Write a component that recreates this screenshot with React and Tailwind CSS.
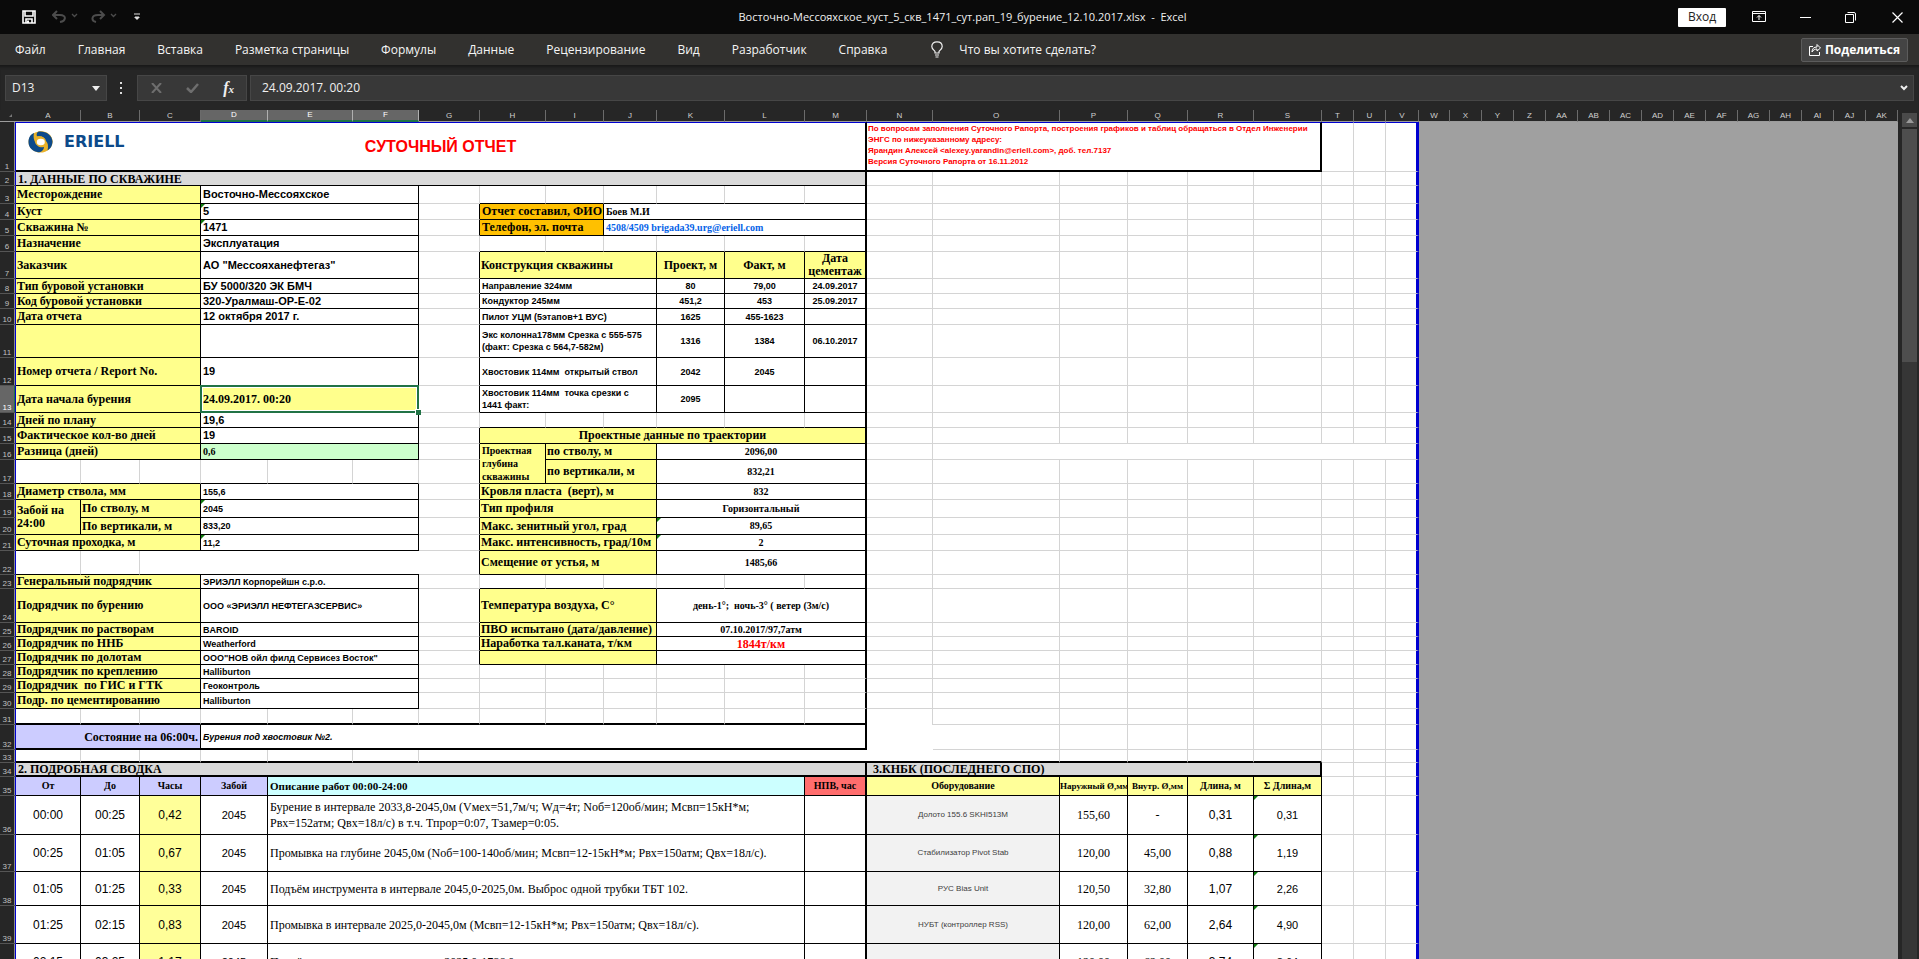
import React, { useState } from 'react';

const COLUMNS = [
    ['A', 'w-[65px]'], ['B', 'w-[59px]'], ['C', 'w-[61px]'], ['D', 'w-[67px]'], ['E', 'w-[85px]'],
    ['F', 'w-[66px]'], ['G', 'w-[61px]'], ['H', 'w-[66px]'], ['I', 'w-[58px]'], ['J', 'w-[53px]'],
    ['K', 'w-[68px]'], ['L', 'w-[80px]'], ['M', 'w-[62px]'], ['N', 'w-[66px]'], ['O', 'w-[127px]'],
    ['P', 'w-[68px]'], ['Q', 'w-[60px]'], ['R', 'w-[66px]'], ['S', 'w-[68px]'], ['T', 'w-[32px]'],
    ['U', 'w-[32px]'], ['V', 'w-[33px]'], ['W', 'w-[31px]'], ['X', 'w-[32px]'], ['Y', 'w-[32px]'],
    ['Z', 'w-[32px]'], ['AA', 'w-[32px]'], ['AB', 'w-[32px]'], ['AC', 'w-[32px]'], ['AD', 'w-[32px]'],
    ['AE', 'w-[32px]'], ['AF', 'w-[32px]'], ['AG', 'w-[32px]'], ['AH', 'w-[32px]'], ['AI', 'w-[32px]'],
    ['AJ', 'w-[32px]'], ['AK', 'w-[32px]'],
];

const ROW_HEIGHTS = [
    'h-[50px]', 'h-[14px]', 'h-[18px]', 'h-[16px]', 'h-[16px]', 'h-[16px]', 'h-[27px]', 'h-[15px]',
    'h-[15px]', 'h-[16px]', 'h-[33px]', 'h-[28px]', 'h-[27px]', 'h-[15px]', 'h-[16px]', 'h-[16px]',
    'h-[24px]', 'h-[16px]', 'h-[18px]', 'h-[17px]', 'h-[16px]', 'h-[24px]', 'h-[14px]', 'h-[34px]',
    'h-[14px]', 'h-[14px]', 'h-[14px]', 'h-[14px]', 'h-[14px]', 'h-[16px]', 'h-[16px]', 'h-[25px]',
    'h-[13px]', 'h-[14px]', 'h-[19px]', 'h-[39px]', 'h-[37px]', 'h-[34px]', 'h-[38px]', 'h-[36px]',
];

const SHEET_COLS = 22; // A..V are inside the print area, the rest is grey
const SERIF = "font-['Liberation_Serif',serif]";
const SANS = "font-['Liberation_Sans',sans-serif]";

const STYLES = {
    section: `bg-[#d9d9d9] ${SERIF} text-[12px] leading-[12px] font-bold align-bottom pl-[2px]`,
    sectionIn: `bg-[#d9d9d9] ${SERIF} text-[12px] leading-[12px] font-bold align-bottom pl-[6px]`,
    label: `bg-[#ffff8c] ${SERIF} text-[12px] leading-[13px] font-bold pl-[1px]`,
    labelC: `bg-[#ffff8c] ${SERIF} text-[12px] leading-[13px] font-bold text-center`,
    labelSm: `bg-[#ffff8c] ${SERIF} text-[10px] leading-[13px] font-bold pl-[2px]`,
    orange: `bg-[#ffc000] ${SERIF} text-[12px] leading-[13px] font-bold pl-[2px] whitespace-nowrap`,
    value: `bg-white ${SANS} text-[11px] leading-[13px] font-bold pl-[2px]`,
    valueSm: `bg-white ${SANS} text-[9px] leading-[12px] font-bold pl-[2px]`,
    valueSmC: `bg-white ${SANS} text-[9px] leading-[12px] font-bold text-center`,
    diff: `bg-[#ccffcc] ${SERIF} text-[10px] leading-[12px] font-bold pl-[2px]`,
    serifSm: `bg-white ${SERIF} text-[10px] leading-[12px] font-bold pl-[2px]`,
    serifSmC: `bg-white ${SERIF} text-[10px] leading-[12px] font-bold text-center`,
    red: `bg-white ${SERIF} text-[12px] leading-[12px] font-bold text-center text-[#ff0000]`,
    active: `bg-[#ffff8c] ${SERIF} text-[12px] leading-[13px] font-bold pl-[2px]`,
    status: `bg-[#ccccff] ${SERIF} text-[12px] leading-[14px] font-bold text-right pr-[2px]`,
    statusText: `bg-white ${SANS} text-[9px] leading-[12px] font-bold italic pl-[2px]`,
    head: `bg-[#ccccff] ${SERIF} text-[10px] leading-[12px] font-bold text-center`,
    headDesc: `bg-[#ccffff] ${SERIF} text-[11px] leading-[14px] font-bold pl-[2px]`,
    headNpv: `bg-[#ff6d6d] ${SERIF} text-[10px] leading-[12px] font-bold text-center`,
    headY: `bg-[#ffff99] ${SERIF} text-[10px] leading-[12px] font-bold text-center`,
    headYSm: `bg-[#ffff99] ${SERIF} text-[9px] leading-[12px] font-bold text-center whitespace-nowrap`,
    time: `bg-white ${SANS} text-[12px] leading-[14px] text-center`,
    hours: `bg-[#ffff99] ${SANS} text-[12px] leading-[14px] text-center`,
    depth: `bg-white ${SANS} text-[11px] leading-[14px] text-center`,
    desc: `bg-white ${SERIF} text-[12px] leading-[16px] pl-[2px]`,
    equip: `bg-[#f2f2f2] ${SANS} text-[8px] leading-[12px] text-center text-[#404040]`,
    dia: `bg-white ${SERIF} text-[12px] leading-[14px] text-center`,
};

const BLACK = 'border-r border-b border-r-black border-b-black';
const THICK_R = 'border-r-2 border-b border-r-black border-b-black';
const THICK_RB = 'border-r-2 border-b-2 border-r-black border-b-black';

// ref: [text, style, colSpan, rowSpan, border, flagged]
const CELLS = {
    A2: ['1. ДАННЫЕ ПО СКВАЖИНЕ', 'section', 13, 1, THICK_R],
    A3: ['Месторождение', 'label', 3],
    D3: ['Восточно-Мессояхское', 'value', 3],
    A4: ['Куст', 'label', 3],
    D4: ['5', 'value', 3, 1, BLACK, true],
    A5: ['Скважина №', 'label', 3],
    D5: ['1471', 'value', 3, 1, BLACK, true],
    A6: ['Назначение', 'label', 3],
    D6: ['Эксплуатация', 'value', 3],
    A7: ['Заказчик', 'label', 3],
    D7: ['АО "Мессояханефтегаз"', 'value', 3],
    A8: ['Тип буровой установки', 'label', 3],
    D8: ['БУ 5000/320 ЭК БМЧ', 'value', 3],
    A9: ['Код буровой установки', 'label', 3],
    D9: ['320-Уралмаш-ОР-Е-02', 'value', 3],
    A10: ['Дата отчета', 'label', 3],
    D10: ['12 октября 2017 г.', 'value', 3],
    A11: ['', 'label', 3],
    D11: ['', 'value', 3],
    A12: ['Номер отчета / Report No.', 'label', 3],
    D12: ['19', 'value', 3],
    A13: ['Дата начала бурения', 'label', 3],
    D13: ['24.09.2017. 00:20', 'active', 3],
    A14: ['Дней по плану', 'label', 3],
    D14: ['19,6', 'value', 3],
    A15: ['Фактическое кол-во дней', 'label', 3],
    D15: ['19', 'value', 3],
    A16: ['Разница (дней)', 'label', 3],
    D16: ['0,6', 'diff', 3],
    A18: ['Диаметр ствола, мм', 'label', 3],
    D18: ['155,6', 'valueSm', 3],
    A19: ['Забой на 24:00', 'label', 1, 2],
    B19: ['По стволу, м', 'label', 2],
    D19: ['2045', 'valueSm', 3, 1, BLACK, true],
    B20: ['По вертикали, м', 'label', 2],
    D20: ['833,20', 'valueSm', 3],
    A21: ['Суточная проходка, м', 'label', 3],
    D21: ['11,2', 'valueSm', 3, 1, BLACK, true],
    A23: ['Генеральный подрядчик', 'label', 3],
    D23: ['ЭРИЭЛЛ Корпорейшн с.р.о.', 'valueSm', 3],
    A24: ['Подрядчик по бурению', 'label', 3],
    D24: ['ООО «ЭРИЭЛЛ НЕФТЕГАЗСЕРВИС»', 'valueSm', 3],
    A25: ['Подрядчик по растворам', 'label', 3],
    D25: ['BAROID', 'valueSm', 3],
    A26: ['Подрядчик по ННБ', 'label', 3],
    D26: ['Weatherford', 'valueSm', 3],
    A27: ['Подрядчик по долотам', 'label', 3],
    D27: ['ООО"НОВ ойл филд Сервисез Восток"', 'valueSm', 3],
    A28: ['Подрядчик по креплению', 'label', 3],
    D28: ['Halliburton', 'valueSm', 3],
    A29: ['Подрядчик  по ГИС и ГТК', 'label', 3],
    D29: ['Геоконтроль', 'valueSm', 3],
    A30: ['Подр. по цементированию', 'label', 3],
    D30: ['Halliburton', 'valueSm', 3],
    A32: ['Состояние на 06:00ч.', 'status', 3, 1, 'border-r border-b-2 border-r-black border-b-black'],
    D32: ['Бурения под хвостовик №2.', 'statusText', 10, 1, THICK_RB],

    H4: ['Отчет составил, ФИО', 'orange', 2],
    J4: ['Боев М.И', 'serifSm', 4, 1, THICK_R],
    H5: ['Телефон, эл. почта', 'orange', 2],
    J5: ['4508/4509 brigada39.urg@eriell.com', 'serifSm', 4, 1, THICK_R],
    H7: ['Конструкция скважины', 'label', 3],
    K7: ['Проект, м', 'labelC', 1],
    L7: ['Факт, м', 'labelC', 1],
    M7: ['Дата цементаж', 'labelC', 1, 1, THICK_R],
    H8: ['Направление 324мм', 'valueSm', 3],
    K8: ['80', 'valueSmC', 1],
    L8: ['79,00', 'valueSmC', 1],
    M8: ['24.09.2017', 'valueSmC', 1, 1, THICK_R],
    H9: ['Кондуктор 245мм', 'valueSm', 3],
    K9: ['451,2', 'valueSmC', 1],
    L9: ['453', 'valueSmC', 1],
    M9: ['25.09.2017', 'valueSmC', 1, 1, THICK_R],
    H10: ['Пилот УЦМ (5этапов+1 ВУС)', 'valueSm', 3],
    K10: ['1625', 'valueSmC', 1],
    L10: ['455-1623', 'valueSmC', 1],
    M10: ['', 'valueSmC', 1, 1, THICK_R],
    H11: ['Экс колонна178мм Срезка с 555-575\n(факт: Срезка с 564,7-582м)', 'valueSm', 3],
    K11: ['1316', 'valueSmC', 1],
    L11: ['1384', 'valueSmC', 1],
    M11: ['06.10.2017', 'valueSmC', 1, 1, THICK_R],
    H12: ['Хвостовик 114мм  открытый ствол', 'valueSm', 3],
    K12: ['2042', 'valueSmC', 1],
    L12: ['2045', 'valueSmC', 1],
    M12: ['', 'valueSmC', 1, 1, THICK_R],
    H13: ['Хвостовик 114мм  точка срезки с\n1441 факт:', 'valueSm', 3],
    K13: ['2095', 'valueSmC', 1],
    L13: ['', 'valueSmC', 1],
    M13: ['', 'valueSmC', 1, 1, THICK_R],
    H15: ['Проектные данные по траектории', 'labelC', 6, 1, THICK_R],
    H16: ['Проектная глубина скважины', 'labelSm', 1, 2],
    I16: ['по стволу, м', 'label', 2],
    K16: ['2096,00', 'serifSmC', 3, 1, THICK_R],
    I17: ['по вертикали, м', 'label', 2],
    K17: ['832,21', 'serifSmC', 3, 1, THICK_R],
    H18: ['Кровля пласта  (верт), м', 'label', 3],
    K18: ['832', 'serifSmC', 3, 1, THICK_R],
    H19: ['Тип профиля', 'label', 3],
    K19: ['Горизонтальный', 'serifSmC', 3, 1, THICK_R],
    H20: ['Макс. зенитный угол, град', 'label', 3],
    K20: ['89,65', 'serifSmC', 3, 1, THICK_R, true],
    H21: ['Макс. интенсивность, град/10м', 'label', 3],
    K21: ['2', 'serifSmC', 3, 1, THICK_R, true],
    H22: ['Смещение от устья, м', 'label', 3],
    K22: ['1485,66', 'serifSmC', 3, 1, THICK_R],
    H24: ['Температура воздуха, С°', 'label', 3],
    K24: ['день-1°;  ночь-3° ( ветер (3м/с)', 'serifSmC', 3, 1, THICK_R],
    H25: ['ПВО испытано (дата/давление)', 'label', 3],
    K25: ['07.10.2017/97,7атм', 'serifSmC', 3, 1, THICK_R],
    H26: ['Наработка тал.каната, т/км', 'label', 3],
    K26: ['1844т/км', 'red', 3, 1, THICK_R],
    H27: ['', 'label', 3],
    K27: ['', 'serifSmC', 3, 1, THICK_R],

    A34: ['2. ПОДРОБНАЯ СВОДКА', 'section', 13, 1, THICK_RB],
    N34: ['3.КНБК (ПОСЛЕДНЕГО СПО)', 'sectionIn', 6, 1, THICK_RB],
    A35: ['От', 'head', 1],
    B35: ['До', 'head', 1],
    C35: ['Часы', 'head', 1],
    D35: ['Забой', 'head', 1],
    E35: ['Описание работ 00:00-24:00', 'headDesc', 8],
    M35: ['НПВ, час', 'headNpv', 1, 1, THICK_R],
    N35: ['Оборудование', 'headY', 2],
    P35: ['Наружный Ø,мм', 'headYSm', 1],
    Q35: ['Внутр. Ø,мм', 'headYSm', 1],
    R35: ['Длина, м', 'headY', 1],
    S35: ['Σ Длина,м', 'headY', 1],
};

const OPERATIONS = [
    ['00:00', '00:25', '0,42', 'Бурение в интервале 2033,8-2045,0м (Vмех=51,7м/ч; Wд=4т; Nоб=120об/мин; Мсвп=15кН*м;\nРвх=152атм; Qвх=18л/с) в т.ч. Тпрор=0:07, Тзамер=0:05.', 'Долото 155.6 SKHI513M', '155,60', '-', '0,31', '0,31'],
    ['00:25', '01:05', '0,67', 'Промывка на глубине 2045,0м (Nоб=100-140об/мин; Мсвп=12-15кН*м; Рвх=150атм; Qвх=18л/с).', 'Стабилизатор Pivot Stab', '120,00', '45,00', '0,88', '1,19'],
    ['01:05', '01:25', '0,33', 'Подъём инструмента в интервале 2045,0-2025,0м. Выброс одной трубки ТБТ 102.', 'РУС Bias Unit', '120,50', '32,80', '1,07', '2,26'],
    ['01:25', '02:15', '0,83', 'Промывка в интервале 2025,0-2045,0м (Мсвп=12-15кН*м; Рвх=150атм; Qвх=18л/с).', 'НУБТ (контроллер RSS)', '120,00', '62,00', '2,64', '4,90'],
    ['02:15', '03:25', '1,17', 'Подъём инструмента в интервале 2025,0-1786,0м.', '', '120,00', '62,00', '3,74', '8,64'],
];

OPERATIONS.forEach(([from, to, hours, text, equip, outer, inner, len, total], i) => {
    const row = 36 + i;
    CELLS[`A${row}`] = [from, 'time', 1];
    CELLS[`B${row}`] = [to, 'time', 1];
    CELLS[`C${row}`] = [hours, 'hours', 1];
    CELLS[`D${row}`] = ['2045', 'depth', 1];
    CELLS[`E${row}`] = [text, 'desc', 8];
    CELLS[`M${row}`] = ['', 'desc', 1, 1, THICK_R];
    CELLS[`N${row}`] = [equip, 'equip', 2];
    CELLS[`P${row}`] = [outer, 'dia', 1];
    CELLS[`Q${row}`] = [inner, 'dia', 1];
    CELLS[`R${row}`] = [len, 'time', 1];
    CELLS[`S${row}`] = [total, 'depth', 1, 1, BLACK, true];
});

// Gridlines of an empty cell, including the edges it shares with the bordered blocks
function blankBorder(row, c) {
    let right = 'border-r border-r-[#d4d4d4]';
    let bottom = 'border-b border-b-[#d4d4d4]';

    if (c === 21) right = 'border-r-3 border-r-[#0000d0]';
    else if (c === 12 && row < 32) right = 'border-r-2 border-r-black';
    else if (c === 6 && ([4, 5].includes(row) || (row >= 7 && row <= 13) || (row >= 15 && row <= 22) || (row >= 24 && row <= 27))) right = 'border-r border-r-black';
    else if (row === 22 && c >= 2 && c <= 5) right = '';
    else if (row === 33 && c >= 6 && c <= 13) right = '';
    else if (row === 32 && c === 13) right = '';
    else if (row === 16 && c >= 14) right = '';

    if ([3, 6, 14, 23].includes(row) && c >= 7 && c <= 12) bottom = 'border-b border-b-black';
    else if ([17, 22].includes(row) && c <= 5) bottom = 'border-b border-b-black';
    else if (row === 31 && c <= 12) bottom = 'border-b-2 border-b-black';
    else if (row === 33 && c <= 18) bottom = 'border-b-2 border-b-black';
    else if ((row === 31 || row === 32) && c === 13) bottom = '';

    return `${right} ${bottom}`;
}

function Logo() {
    return (
        <div className="absolute left-3 top-2 flex items-center gap-[11px]">
            <svg width="25" height="22" viewBox="0 0 25 22" aria-hidden="true">
                <ellipse cx="12.500" cy="11" rx="12" ry="10.500" fill="#e9b22a" />
                <path d="M10 0.700C17 -1 24 3 24.500 10C24.500 14 22 16 19 15C20 11 18 7 13 6.500C9 6.500 8 3 10 0.700Z" fill="#e9b22a" />
                <path d="M0.500 11C0.500 6 3 3 6 2C5 6 6 9 7 11C8 15 12 17 16 16C16 19 13 21.500 10 21.300C5 20.500 .5 17 .5 11Z" fill="#0d4a8a" />
                <path d="M11 0.600C18 0 24 4 24.500 10.500C24.500 15 22 18 19.500 19.500C20.500 15 20 12 18 10C17 6 13 4.500 9 5.500C8 3 9 1 11 .6Z" fill="#0d4a8a" />
                <path d="M9 5.500C13 4.500 17 6 18 10C16.500 8 14 7 11.500 8.500C9.500 9.500 9 11 9.500 13.500C6.500 11 6.500 7.500 9 5.500Z" fill="#e9b22a" />
                <ellipse cx="12.800" cy="11" rx="4" ry="3.200" fill="#fff" />
            </svg>
            <span className="font-['DejaVu_Sans',sans-serif] text-[16px] leading-[22px] font-bold text-[#0d4a8a]">ERIELL</span>
        </div>
    );
}

function Cell({ id, cell }) {
    const [text, kind, colSpan, rowSpan = 1, border = BLACK, flagged] = cell;
    return (
        <td colSpan={colSpan} rowSpan={rowSpan} className={`relative p-0 ${border} ${STYLES[kind]}`}>
            {flagged && (
                <svg width="4" height="4" className="absolute left-0 top-0" aria-hidden="true">
                    <path d="M0 0H4L0 4Z" fill="#107c10" />
                </svg>
            )}
            {id === 'J5' ? (
                <a href="mailto:brigada39.urg@eriell.com" className="text-[#0563e8]">{text}</a>
            ) : kind === 'orange' || kind === 'headYSm' ? (
                text
            ) : (
                <span className="whitespace-pre-wrap">{text}</span>
            )}
            {id === 'D13' && (
                <div className="absolute -inset-px z-10 border-2 border-[#217346] shadow-[inset_0_0_0_1px_white]">
                    <div className="absolute -bottom-1 -right-1 size-[6px] border-l border-t border-white bg-[#217346]" />
                </div>
            )}
        </td>
    );
}

function Row({ row, covered }) {
    const cells = [];
    for (let c = 0; c < SHEET_COLS; c++) {
        if (covered.has(`${row}:${c}`)) continue;
        const id = `${COLUMNS[c][0]}${row}`;
        const cell = CELLS[id];
        if (cell) {
            cells.push(<Cell key={id} id={id} cell={cell} />);
        } else {
            cells.push(<td key={id} className={`bg-white p-0 ${blankBorder(row, c)}`} />);
        }
    }
    return <>{cells}</>;
}

// Cells hidden under a merged neighbour
function getCovered() {
    const covered = new Set();
    Object.entries(CELLS).forEach(([id, cell]) => {
        const [, letters, digits] = id.match(/([A-Z]+)(\d+)/);
        const col = COLUMNS.findIndex(([name]) => name === letters);
        const row = Number(digits);
        for (let r = 0; r < (cell[3] || 1); r++) {
            for (let c = 0; c < cell[2]; c++) {
                if (r || c) covered.add(`${row + r}:${col + c}`);
            }
        }
    });
    return covered;
}

function RowNumber({ n }) {
    return (
        <th
            scope="row"
            className={`border-b border-r border-b-[#555] border-r-[#0000d0] p-0 pr-px text-center align-bottom text-[8px] leading-[9px] font-normal ${
                n === 13 ? 'bg-[#666] text-white shadow-[inset_-1px_0_0_#217346]' : 'bg-[#262626] text-[#c0c0c0] shadow-[inset_-1px_0_0_#8a8a8a]'
            }`}
        >
            {n}
        </th>
    );
}

function Sheet() {
    const covered = getCovered();
    return (
        <table className="w-0 table-fixed border-separate border-spacing-0 text-left font-['Liberation_Sans',sans-serif] text-black">
            <colgroup>
                <col className="w-4" />
                {COLUMNS.map(([name, width]) => (
                    <col key={name} className={width} />
                ))}
            </colgroup>
            <thead>
                <tr className="h-[12px]">
                    <td className="border-b border-b-[#9c9c9c] bg-[#262626] p-0">
                        <svg width="5" height="5" className="ml-2" aria-hidden="true">
                            <path d="M4 1V4H1Z" fill="#777" />
                        </svg>
                    </td>
                    {COLUMNS.map(([name]) => (
                        <th
                            key={name}
                            scope="col"
                            className={`p-0 text-center text-[8px] leading-[10px] font-normal ${
                                ['D', 'E', 'F'].includes(name)
                                    ? 'border-b-2 border-r border-b-[#217346] border-r-[#b0b0b0] bg-[#666] text-white'
                                    : 'border-b border-r border-b-[#9c9c9c] border-r-[#6b6b6b] bg-[#262626] text-[#d0d0d0]'
                            }`}
                        >
                            {name}
                        </th>
                    ))}
                </tr>
            </thead>
            <tbody>
                <tr className="h-[50px]">
                    <RowNumber n={1} />
                    <td colSpan={13} className="relative border-b-2 border-r-2 border-t border-b-black border-r-black border-t-[#0000d0] bg-white p-0 text-center text-[16px] leading-[18px] font-bold text-[#ff0000]">
                        <Logo />
                        СУТОЧНЫЙ ОТЧЕТ
                    </td>
                    <td colSpan={6} className="border-b-2 border-r-2 border-t border-b-black border-r-black border-t-[#0000d0] bg-white p-0 pl-px align-top text-[8px] leading-[11px] font-bold text-[#ff0000]">
                        По вопросам заполнения Суточного Рапорта, построения графиков и таблиц обращаться в Отдел Инженерии<br />
                        ЭНГС по нижеуказанному адресу:<br />
                        Ярандин Алексей &lt;alexey.yarandin@eriell.com&gt;, доб. тел.7137<br />
                        Версия Суточного Рапорта от 16.11.2012
                    </td>
                    <td className="border-b border-r border-t border-b-[#d4d4d4] border-r-[#d4d4d4] border-t-[#0000d0] bg-white p-0" />
                    <td className="border-b border-r border-t border-b-[#d4d4d4] border-r-[#d4d4d4] border-t-[#0000d0] bg-white p-0" />
                    <td className="border-b border-r-3 border-t border-b-[#d4d4d4] border-r-[#0000d0] border-t-[#0000d0] bg-white p-0" />
                    <td colSpan={15} rowSpan={40} className="bg-[#a0a0a0] p-0" />
                </tr>
                {ROW_HEIGHTS.slice(1).map((height, i) => (
                    <tr key={i} className={height}>
                        <RowNumber n={i + 2} />
                        <Row row={i + 2} covered={covered} />
                    </tr>
                ))}
            </tbody>
        </table>
    );
}

function TitleBar() {
    return (
        <header className="flex h-[34px] shrink-0 items-center justify-between bg-[#0a0a0a] text-[#f0f0f0]">
            <div className="flex flex-1 items-center pl-[22px]">
                <button aria-label="Сохранить">
                    <svg width="14" height="14" viewBox="0 0 14 14">
                        <path d="M1 1H13V13H1ZM3 1V6H11V1M4 13V9H10V13" fill="none" stroke="#fff" strokeWidth="1.600" />
                        <path d="M5 10.500H7V13H5Z" fill="#fff" />
                    </svg>
                </button>
                <button aria-label="Отменить" className="ml-4">
                    <svg width="27" height="14" viewBox="0 0 27 14" fill="none" stroke="#4c4c4c">
                        <path d="M5 1L1 5L5 9M1 5H8C15 5 14 11 8 12" strokeWidth="2" />
                        <path d="M20 4L22.500 6.500L25 4" strokeWidth="1.300" />
                    </svg>
                </button>
                <button aria-label="Повторить" className="ml-3">
                    <svg width="27" height="14" viewBox="0 0 27 14" fill="none" stroke="#4c4c4c">
                        <path d="M9 1L13 5L9 9M13 5H7C0 5 0 11 5 12" strokeWidth="2" />
                        <path d="M20 4L22.500 6.500L25 4" strokeWidth="1.300" />
                    </svg>
                </button>
                <button aria-label="Настройка панели быстрого доступа" className="ml-4">
                    <svg width="6" height="8" viewBox="0 0 6 8">
                        <path d="M0 1H6M1 4H5" stroke="#ddd" />
                        <path d="M0 4H6L3 7Z" fill="#ddd" />
                    </svg>
                </button>
            </div>
            <h1 className="whitespace-pre text-[11px] leading-4">Восточно-Мессояхское_куст_5_скв_1471_сут.рап_19_бурение_12.10.2017.xlsx  -  Excel</h1>
            <div className="flex flex-1 items-center justify-end pr-4">
                <button className="h-[19px] w-12 rounded-[1px] bg-white text-[12px] leading-4 text-[#222]">Вход</button>
                <button aria-label="Параметры ленты" className="ml-[26px]">
                    <svg width="14" height="12" viewBox="0 0 14 12" fill="none" stroke="#fff">
                        <path d="M.5 .5H13.500V10.500H.5ZM.5 2.500H13.500M7 9V4.500M5 6.500L7 4.500L9 6.500" />
                    </svg>
                </button>
                <button aria-label="Свернуть" className="ml-[34px]">
                    <svg width="11" height="11" stroke="#fff">
                        <path d="M0 5.500H11" />
                    </svg>
                </button>
                <button aria-label="Свернуть в окно" className="ml-[34px]">
                    <svg width="11" height="11" viewBox="0 0 11 11" fill="none" stroke="#fff">
                        <path d="M.5 2.500H8.500V10.500H.5ZM2.500 .5H9Q10.500 .5 10.500 2V8.500" />
                    </svg>
                </button>
                <button aria-label="Закрыть" className="ml-[36px]">
                    <svg width="11" height="11" viewBox="0 0 11 11" fill="none" stroke="#fff">
                        <path d="M.5 .5L10.500 10.500M10.500 .5L.5 10.500" strokeWidth="1.200" />
                    </svg>
                </button>
            </div>
        </header>
    );
}

const MENU = ['Файл', 'Главная', 'Вставка', 'Разметка страницы', 'Формулы', 'Данные', 'Рецензирование', 'Вид', 'Разработчик', 'Справка'];

function Ribbon() {
    return (
        <nav className="flex h-[31px] shrink-0 items-center bg-[#32312f] pl-[15px] pr-[11px] text-[12px] leading-4 text-[#f5f5f5]">
            <div className="flex gap-8">
                {MENU.map((item) => (
                    <button key={item} className="whitespace-nowrap">{item}</button>
                ))}
            </div>
            <button className="ml-11 flex items-center gap-4 whitespace-nowrap">
                <svg width="12" height="17" viewBox="0 0 12 17" fill="none" stroke="#f0f0f0">
                    <path d="M4 12V10.500C3 9 .8 8 .8 5.500C.8 2.500 3 .8 6 .8S11.200 2.500 11.200 5.500C11.200 8 9 9 8 10.500V12ZM4 14H8M4.500 16H7.500" strokeWidth="1.200" />
                </svg>
                Что вы хотите сделать?
            </button>
            <button className="ml-auto flex h-6 items-center gap-1 rounded-[2px] border border-[#5c5c5c] bg-[#444] px-[7px] font-bold text-white">
                <svg width="12" height="13" viewBox="0 0 12 13" fill="none" stroke="#fff">
                    <path d="M4 3.500H.5V12.500H10.500V9M3 9C3 5.500 5 4 8 4V1.500L11.500 5L8 8V6C6 6 4 7 3 9Z" />
                </svg>
                Поделиться
            </button>
        </nav>
    );
}

function FormulaBar() {
    const [value, setValue] = useState('24.09.2017. 00:20');
    const [cellName, setCellName] = useState('D13');

    return (
        <div className="flex h-[45px] shrink-0 items-start bg-[#262626] px-[5px] pt-[10px] text-[#f0f0f0] shadow-[inset_0_4px_3px_-2px_#181818]">
            <div className="flex h-[26px] w-[102px] items-center border border-[#464646] bg-[#383838] px-[6px]">
                <input aria-label="Имя ячейки" value={cellName} onChange={(e) => setCellName(e.target.value)} className="w-full min-w-0 bg-transparent text-[12px] leading-4 outline-none" />
                <button aria-label="Список имён">
                    <svg width="8" height="5"><path d="M0 0H8L4 5Z" fill="#eee" /></svg>
                </button>
            </div>
            <svg width="3" height="12" className="mx-[13px] mt-[7px]" fill="#ddd" aria-hidden="true">
                <path d="M0 0H2V2H0ZM0 5H2V7H0ZM0 10H2V12H0Z" />
            </svg>
            <div className="ml-px flex h-[26px] w-[110px] items-center justify-between border border-[#464646] bg-[#383838] pl-[13px] pr-3">
                <button aria-label="Отмена">
                    <svg width="11" height="10" stroke="#6e6e6e" strokeWidth="2"><path d="M1 0L10 10M10 0L1 10" /></svg>
                </button>
                <button aria-label="Ввод">
                    <svg width="13" height="10" fill="none" stroke="#6e6e6e" strokeWidth="2.500"><path d="M1 5L5 9L12 1" /></svg>
                </button>
                <button aria-label="Вставить функцию" className="font-['Liberation_Serif',serif] text-[16px] leading-4 font-bold italic">
                    f<span className="text-[11px]">x</span>
                </button>
            </div>
            <div className="ml-[3px] flex h-[26px] flex-1 items-center border border-[#464646] bg-[#383838] pl-[11px] pr-[5px]">
                <input aria-label="Строка формул" value={value} onChange={(e) => setValue(e.target.value)} className="min-w-0 flex-1 bg-transparent text-[12px] leading-4 outline-none" />
                <button aria-label="Развернуть строку формул">
                    <svg width="8" height="6" fill="none" stroke="#eee" strokeWidth="2"><path d="M1 1L4 4L7 1" /></svg>
                </button>
            </div>
        </div>
    );
}

export default function App() {
    return (
        <div className="flex h-screen flex-col overflow-hidden bg-[#262626] font-['Open_Sans',sans-serif]">
            <TitleBar />
            <Ribbon />
            <FormulaBar />
            <main className="flex min-h-0 flex-1">
                <div className="min-w-0 flex-1 overflow-hidden">
                    <Sheet />
                </div>
                <div className="flex w-[20px] shrink-0 flex-col gap-[2px] bg-[#262626] pl-[3px] pr-[2px] pt-[3px]">
                    <button aria-label="Прокрутить вверх" className="flex h-[14px] items-center justify-center bg-[#4a4a4a]">
                        <svg width="8" height="5"><path d="M0 5H8L4 0Z" fill="#999" /></svg>
                    </button>
                    <div className="flex-1 bg-[#363636]">
                        <div className="h-[233px] bg-[#4e4e4e]" />
                    </div>
                </div>
            </main>
        </div>
    );
}
